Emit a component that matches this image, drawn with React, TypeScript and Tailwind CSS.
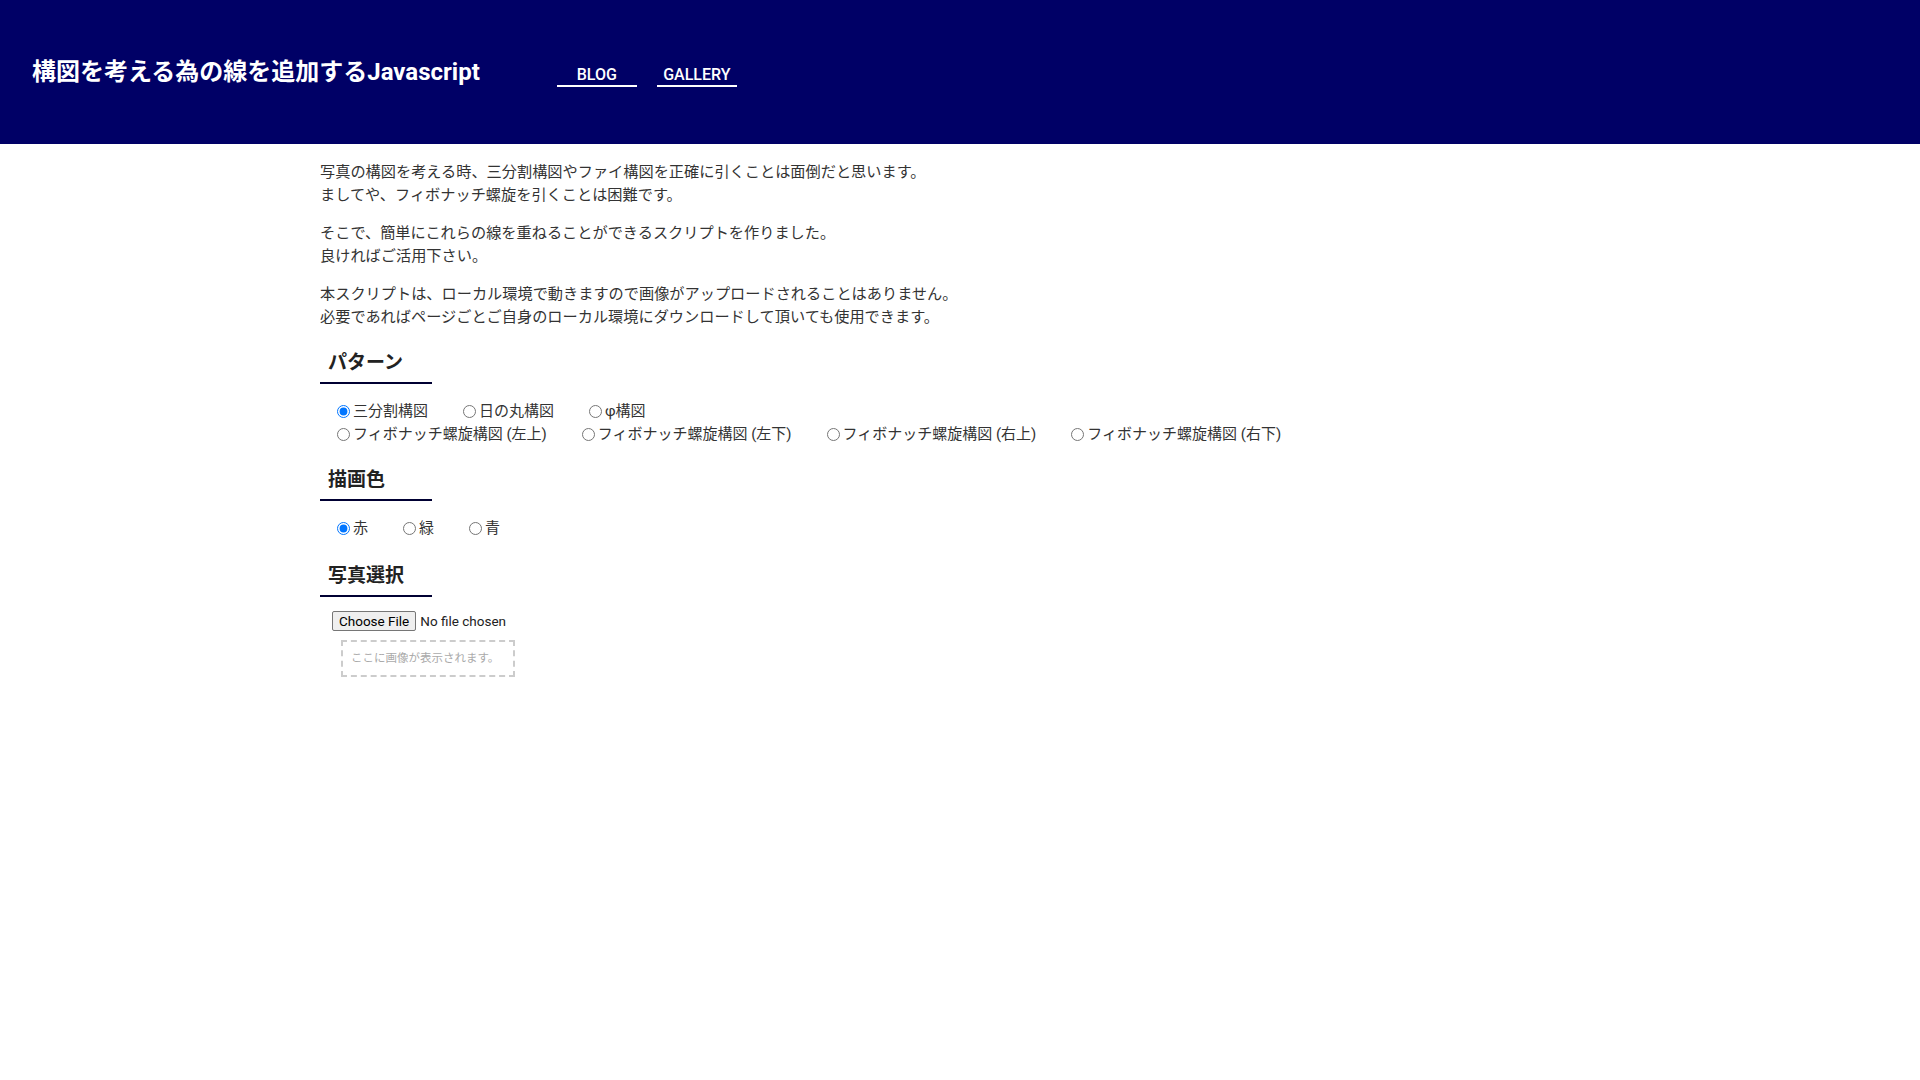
const patternRow1 = ["三分割構図", "日の丸構図", "φ構図"];
const patternRow2 = [
  "フィボナッチ螺旋構図 (左上)",
  "フィボナッチ螺旋構図 (左下)",
  "フィボナッチ螺旋構図 (右上)",
  "フィボナッチ螺旋構図 (右下)",
];
const colors = ["赤", "緑", "青"];

function SectionTitle({ children, className = "" }: { children: React.ReactNode; className?: string }) {
  return (
    <h2
      className={`w-[112px] border-b-2 border-[#000033] pb-[6px] pl-[8px] text-[19px] font-bold leading-[27px] text-[#222] ${className}`}
    >
      {children}
    </h2>
  );
}

function Radio({ name, label, checked }: { name: string; label: string; checked?: boolean }) {
  return (
    <label className="mr-[30px] flex items-center">
      <input
        type="radio"
        name={name}
        defaultChecked={checked}
        className="ml-[5px] mr-[3px] h-[13px] w-[13px]"
      />
      {label}
    </label>
  );
}

export default function App() {
  return (
    <div className="min-h-screen bg-white font-['Roboto','Noto_Sans_CJK_JP',sans-serif] text-[#333]">
      <header className="flex h-[144px] items-center bg-[#000066] pl-[32px]">
        <h1 className="text-[24px] font-bold text-white">構図を考える為の線を追加するJavascript</h1>
        <nav className="ml-[77px] flex gap-[20px]">
          <a href="#" className="w-[80px] border-b-2 border-white pt-[7px] text-center text-[16px] font-medium leading-[20px] text-white">
            BLOG
          </a>
          <a href="#" className="w-[80px] border-b-2 border-white pt-[7px] text-center text-[16px] font-medium leading-[20px] text-white">
            GALLERY
          </a>
        </nav>
      </header>

      <main className="mx-auto max-w-[1280px] pt-[17px] text-[15.2px] leading-[22.5px]">
        <div className="flex flex-col gap-[16px]">
          <p>
            写真の構図を考える時、三分割構図やファイ構図を正確に引くことは面倒だと思います。
            <br />
            ましてや、フィボナッチ螺旋を引くことは困難です。
          </p>
          <p>
            そこで、簡単にこれらの線を重ねることができるスクリプトを作りました。
            <br />
            良ければご活用下さい。
          </p>
          <p>
            本スクリプトは、ローカル環境で動きますので画像がアップロードされることはありません。
            <br />
            必要であればページごとご自身のローカル環境にダウンロードして頂いても使用できます。
          </p>
        </div>

        <SectionTitle className="mt-[21px]">パターン</SectionTitle>
        <div className="mt-[16px] pl-[12px] text-[15px]">
          <div className="flex h-[23px] items-center">
            {patternRow1.map((p, i) => (
              <Radio key={p} name="pattern" label={p} checked={i === 0} />
            ))}
          </div>
          <div className="flex h-[23px] items-center">
            {patternRow2.map((p) => (
              <Radio key={p} name="pattern" label={p} />
            ))}
          </div>
        </div>

        <SectionTitle className="mt-[20px]">描画色</SectionTitle>
        <div className="mt-[16px] flex h-[23px] items-center pl-[12px] text-[15px]">
          {colors.map((c, i) => (
            <Radio key={c} name="color" label={c} checked={i === 0} />
          ))}
        </div>

        <SectionTitle className="mt-[22px]">写真選択</SectionTitle>
        <div className="mt-[14px] pl-[12px]">
          <input
            type="file"
            className="block text-[13.5px] leading-[20px] text-[#222] file:mr-[4px] file:rounded-[2px] file:border file:border-[#767676] file:bg-[#efefef] file:px-[6px] file:py-[1px] file:text-[13.5px] file:leading-[16px] file:text-black"
          />
          <div className="ml-[9px] mt-[9px] flex h-[37px] w-[174px] items-center whitespace-nowrap border-2 border-dashed border-[#ccc] px-[8px] text-[11.5px] text-[#aaa]">
            ここに画像が表示されます。
          </div>
        </div>
      </main>
    </div>
  );
}
